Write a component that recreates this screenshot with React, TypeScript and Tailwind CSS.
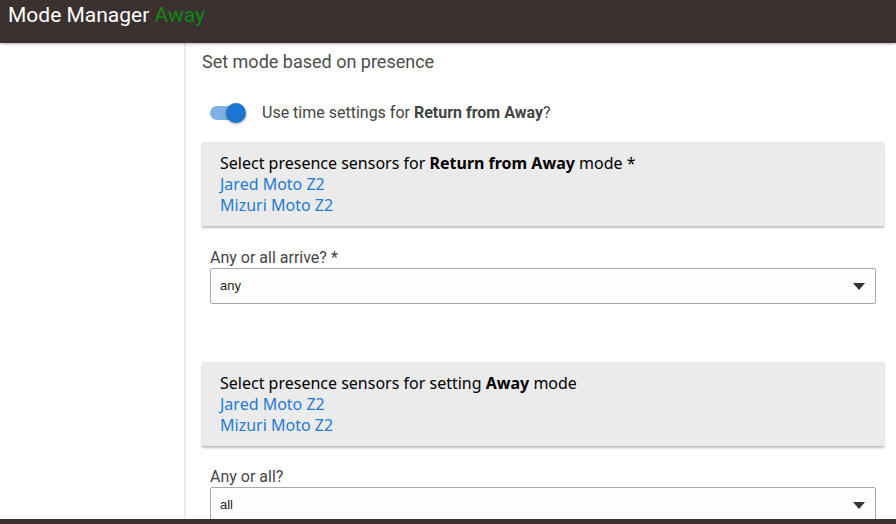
import React from "react";

function Toggle() {
  return (
    <div className="relative w-[36px] h-[20px] flex items-center">
      <div className="w-[34px] h-[14px] rounded-full bg-[#7fb1e6]" />
      <div className="absolute left-[16px] top-0 w-[20px] h-[20px] rounded-full bg-[#1a76d2] shadow-[0_1px_3px_rgba(0,0,0,0.4)]" />
    </div>
  );
}

function Card({ children }: { children: React.ReactNode }) {
  return (
    <div className="bg-[#ebebeb] shadow-[0_2px_2px_rgba(0,0,0,0.25),0_0_1px_rgba(0,0,0,0.1)] pl-[18px] pr-4 pt-[11px] pb-[10px] text-[16px] leading-[21px] text-black [font-family:'Noto_Sans',sans-serif]">
      {children}
    </div>
  );
}

function Select({ value }: { value: string }) {
  return (
    <div className="h-[36px] border border-[#a9a9a9] rounded-[2px] bg-[#fdfdfd] flex items-center justify-between pl-[9px] pr-[10px] [font-family:'Liberation_Sans',sans-serif] text-[13px] text-[#222]">
      <span>{value}</span>
      <svg width="12" height="7" viewBox="0 0 12 7">
        <path d="M0 0 L12 0 L6 7 Z" fill="#333" />
      </svg>
    </div>
  );
}

export default function App() {
  return (
    <div className="w-[896px] h-[524px] flex flex-col overflow-hidden bg-white [font-family:Roboto,sans-serif]">
      <div className="h-[43px] shrink-0 bg-[#3a3130] flex items-start pl-[8px] pt-[3px] text-[21px] leading-[25px] text-white z-10 shadow-[0_1px_3px_rgba(0,0,0,0.3)]">
        <span>Mode Manager&nbsp;</span>
        <span className="text-[#0f8a12]">Away</span>
      </div>
      <div className="flex flex-1 min-h-0">
        <div className="w-[185px] shrink-0 border-r border-[#e6e6e6] shadow-[1px_0_2px_rgba(0,0,0,0.06)]" />
        <div className="flex-1 min-w-0 pl-[17px] pr-[12px] pt-[8px] overflow-hidden">
          <div className="text-[18px] leading-[22px] text-[#4d4d4d]">Set mode based on presence</div>
          <div className="flex items-center mt-[29px] pl-[8px] h-[22px]">
            <Toggle />
            <span className="ml-[16px] text-[16px] text-[#444]">
              Use time settings for <b className="font-bold">Return from Away</b>?
            </span>
          </div>
          <div className="mt-[18px]">
            <Card>
              <div>
                Select presence sensors for <b className="font-bold">Return from Away</b> mode *
              </div>
              <div className="text-[#1f7bd2]">Jared Moto Z2</div>
              <div className="text-[#1f7bd2]">Mizuri Moto Z2</div>
            </Card>
          </div>
          <div className="px-[8px] mt-[22px]">
            <div className="text-[16px] leading-[20px] text-[#444]">Any or all arrive? *</div>
            <Select value="any" />
          </div>
          <div className="mt-[58px]">
            <Card>
              <div>
                Select presence sensors for setting <b className="font-bold">Away</b> mode
              </div>
              <div className="text-[#1f7bd2]">Jared Moto Z2</div>
              <div className="text-[#1f7bd2]">Mizuri Moto Z2</div>
            </Card>
          </div>
          <div className="px-[8px] mt-[21px]">
            <div className="text-[16px] leading-[20px] text-[#444]">Any or all?</div>
            <Select value="all" />
          </div>
        </div>
      </div>
      <div className="h-[5px] shrink-0 bg-[#3a3130]" />
    </div>
  );
}
